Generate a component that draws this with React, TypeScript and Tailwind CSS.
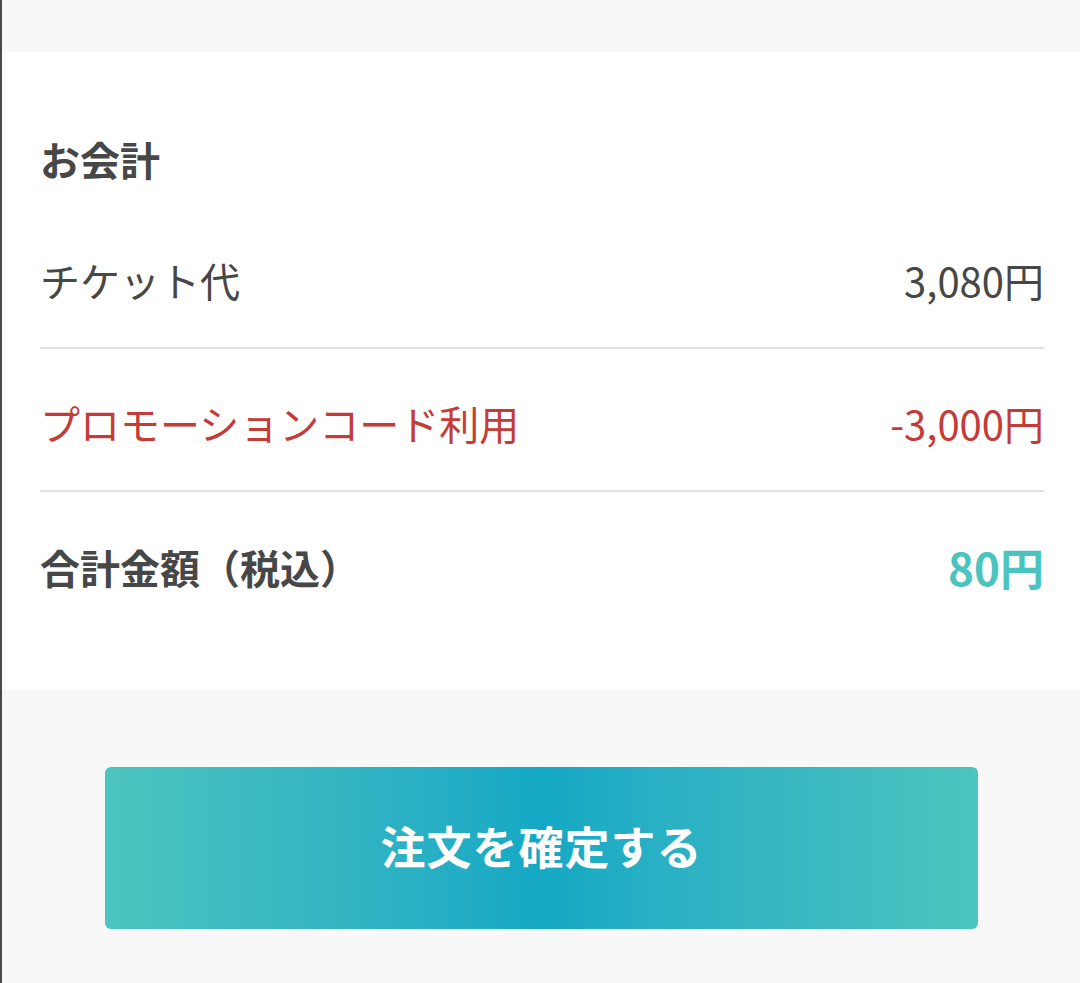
const font = "font-['Noto_Sans_CJK_JP','Noto_Sans',sans-serif]"

interface Row {
    label: string
    value: string
    labelClass: string
    valueClass: string
    pt: string
    pb: string
    divider: boolean
}

const rows: Row[] = [
    { label: "チケット代", value: "3,080円", labelClass: "text-[#474747]", valueClass: "text-[40px] text-[#474747]", pt: "pt-[61px]", pb: "pb-[37px]", divider: true },
    { label: "プロモーションコード利用", value: "-3,000円", labelClass: "text-[#c43b37]", valueClass: "text-[40px] text-[#c43b37]", pt: "pt-[44px]", pb: "pb-[37px]", divider: true },
    { label: "合計金額（税込）", value: "80円", labelClass: "text-[#474747] font-bold", valueClass: "text-[#4bc3bf] font-bold text-[44px]", pt: "pt-[45px]", pb: "pb-[93px]", divider: false },
]

export default function App() {
    return (
        <div className={`w-[1080px] h-[983px] flex bg-[#f8f8f8] ${font}`}>
            {/* left edge line */}
            <div className="w-[2px] h-full bg-[#4a4a4a]" />
            <div className="flex-1 flex flex-col">
                <div className="h-[52px]" />

                {/* summary */}
                <div className="bg-white pl-[38px] pr-[36px] pt-[77px]">
                    <div className="text-[40px] leading-[60px] font-bold text-[#474747]">お会計</div>
                    {rows.map((row) => (
                        <div key={row.label}>
                            <div className={`flex items-center justify-between ${row.pt} ${row.pb}`}>
                                <span className={`text-[40px] leading-[60px] ${row.labelClass}`}>{row.label}</span>
                                <span className={`leading-[60px] ${row.valueClass}`}>{row.value}</span>
                            </div>
                            {row.divider && <div className="h-[2px] bg-[#e2e2e2]" />}
                        </div>
                    ))}
                </div>

                {/* confirm button */}
                <div className="pt-[77px] pl-[103px] pr-[102px]">
                    <button className="w-full h-[162px] rounded-[6px] bg-linear-to-r from-[#4cc4bf] via-[#14a8c5] to-[#4cc4bf] text-white text-[45px] font-bold tracking-[1px] pb-[4px]">
                        注文を確定する
                    </button>
                </div>
            </div>
        </div>
    )
}
